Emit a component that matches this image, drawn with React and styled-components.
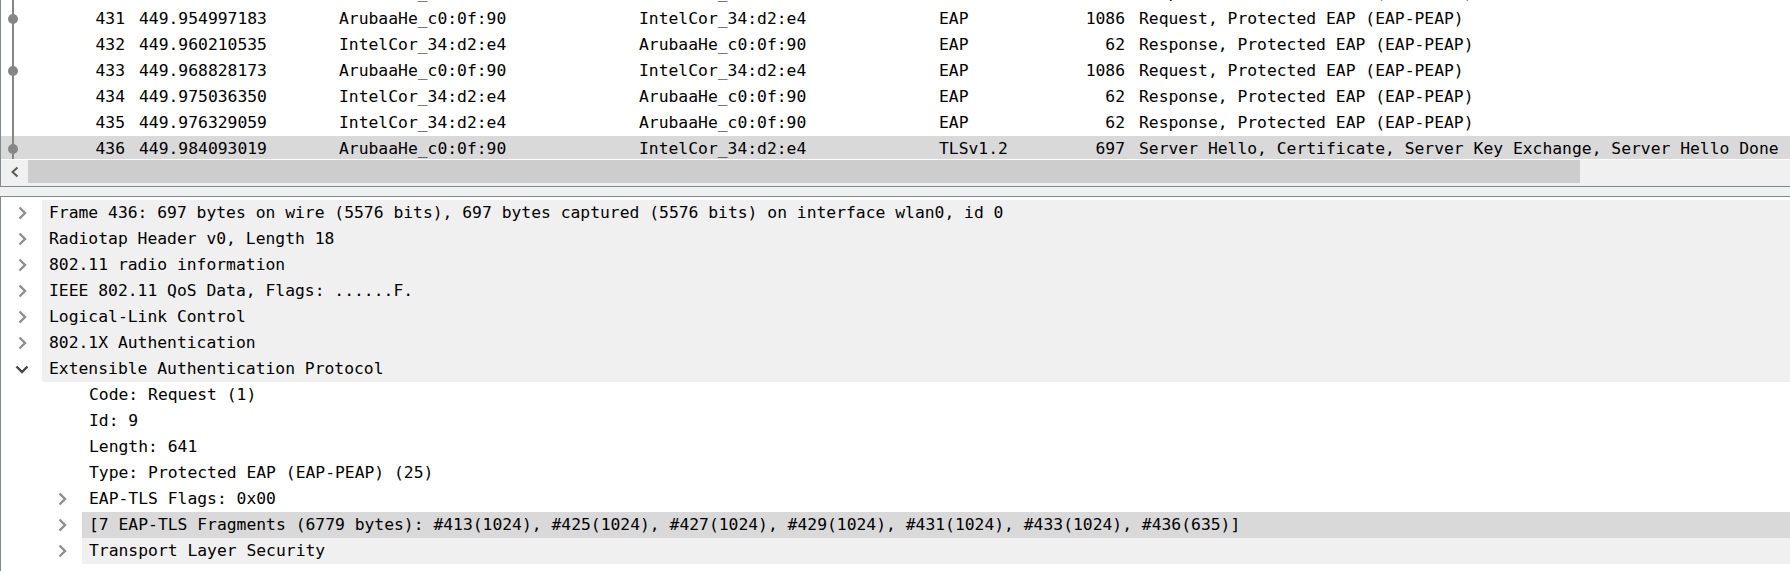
import React from "react";
import styled, { createGlobalStyle } from "styled-components";

const Global = createGlobalStyle`
  html, body { margin: 0; padding: 0; background: #ffffff; }
  body { font-family: "DejaVu Sans Mono", "Liberation Mono", monospace; }
`;

const Window = styled.div`
  width: 1790px;
  height: 571px;
  overflow: hidden;
  display: flex;
  flex-direction: column;
  background: #f0f0f0;
  font-family: "DejaVu Sans Mono", "Liberation Mono", monospace;
  font-size: 16.35px;
  color: #000;
`;

const PacketPane = styled.div`
  flex: 0 0 auto;
  display: flex;
  flex-direction: column;
  background: #ffffff;
  border-left: 1px solid #828790;
  border-bottom: 1px solid #828790;
`;

const ListViewport = styled.div`
  height: 159px;
  overflow: hidden;
  background: #ffffff;
  margin-bottom: 1px;
`;

const PacketList = styled.div`
  margin-top: -20px;
  display: flex;
  flex-direction: column;
`;

const PacketRow = styled.div`
  display: grid;
  grid-template-columns: 131px 200px 300px 300px 100px 100px 1fr;
  height: 26px;
  line-height: 26px;
  background: ${(p) => (p.$selected ? "#d9d9d9" : "#ffffff")};
  white-space: pre;
`;

const Cell = styled.div`
  padding: 0 7px;
  overflow: hidden;
  text-align: ${(p) => (p.$right ? "right" : "left")};
`;

const NoCell = styled.div`
  display: flex;
  justify-content: space-between;
  align-items: stretch;
  padding: 0 7px 0 6px;
`;

const HScroll = styled.div`
  height: 26px;
  display: flex;
  align-items: flex-start;
  background: #f0f0f0;
`;

const ScrollArrow = styled.div`
  width: 27px;
  height: 23px;
  display: flex;
  align-items: center;
  justify-content: center;
`;

const Thumb = styled.div`
  width: 1552px;
  height: 23px;
  background: #cdcdcd;
`;

const Splitter = styled.div`
  height: 9px;
  flex: 0 0 auto;
  background: #f0f0f0;
`;

const DetailPane = styled.div`
  flex: 1 1 auto;
  background: #ffffff;
  border-top: 1px solid #828790;
  border-left: 1px solid #828790;
  padding-top: 3px;
  display: flex;
  flex-direction: column;
`;

const TreeRow = styled.div`
  display: flex;
  height: 26px;
  line-height: 26px;
  padding-left: ${(p) => p.$level * 40}px;
  white-space: pre;
`;

const Toggle = styled.div`
  flex: 0 0 41px;
  display: flex;
  align-items: center;
  justify-content: center;
`;

const Label = styled.div`
  flex: 1 1 auto;
  padding-left: 7px;
  background: ${(p) =>
    p.$selected ? "#d9d9d9" : p.$shaded ? "#f0f0f0" : "#ffffff"};
`;

const Relation = ({ dot }) => (
  <svg width="12" height="26" viewBox="0 0 12 26">
    <rect x="5" y="0" width="2" height="26" fill="#868686" />
    {dot && <circle cx="6" cy="13" r="5" fill="#868686" />}
  </svg>
);

const Chevron = ({ open }) =>
  open ? (
    <svg width="14" height="14" viewBox="0 0 14 14">
      <polyline
        points="1.5,4.5 7,10 12.5,4.5"
        fill="none"
        stroke="#454545"
        strokeWidth="2.4"
      />
    </svg>
  ) : (
    <svg width="14" height="14" viewBox="0 0 14 14">
      <polyline
        points="4.5,1.5 10,7 4.5,12.5"
        fill="none"
        stroke="#8e8e8e"
        strokeWidth="2.4"
      />
    </svg>
  );

const packets = [
  ["430", "449.951791208", "IntelCor_34:d2:e4", "ArubaaHe_c0:0f:90", "EAP", "62", "Response, Protected EAP (EAP-PEAP)", true],
  ["431", "449.954997183", "ArubaaHe_c0:0f:90", "IntelCor_34:d2:e4", "EAP", "1086", "Request, Protected EAP (EAP-PEAP)", true],
  ["432", "449.960210535", "IntelCor_34:d2:e4", "ArubaaHe_c0:0f:90", "EAP", "62", "Response, Protected EAP (EAP-PEAP)", false],
  ["433", "449.968828173", "ArubaaHe_c0:0f:90", "IntelCor_34:d2:e4", "EAP", "1086", "Request, Protected EAP (EAP-PEAP)", true],
  ["434", "449.975036350", "IntelCor_34:d2:e4", "ArubaaHe_c0:0f:90", "EAP", "62", "Response, Protected EAP (EAP-PEAP)", false],
  ["435", "449.976329059", "IntelCor_34:d2:e4", "ArubaaHe_c0:0f:90", "EAP", "62", "Response, Protected EAP (EAP-PEAP)", false],
  ["436", "449.984093019", "ArubaaHe_c0:0f:90", "IntelCor_34:d2:e4", "TLSv1.2", "697", "Server Hello, Certificate, Server Key Exchange, Server Hello Done", true],
];

const tree = [
  { level: 0, toggle: "closed", shaded: true, text: "Frame 436: 697 bytes on wire (5576 bits), 697 bytes captured (5576 bits) on interface wlan0, id 0" },
  { level: 0, toggle: "closed", shaded: true, text: "Radiotap Header v0, Length 18" },
  { level: 0, toggle: "closed", shaded: true, text: "802.11 radio information" },
  { level: 0, toggle: "closed", shaded: true, text: "IEEE 802.11 QoS Data, Flags: ......F." },
  { level: 0, toggle: "closed", shaded: true, text: "Logical-Link Control" },
  { level: 0, toggle: "closed", shaded: true, text: "802.1X Authentication" },
  { level: 0, toggle: "open", shaded: true, text: "Extensible Authentication Protocol" },
  { level: 1, toggle: null, text: "Code: Request (1)" },
  { level: 1, toggle: null, text: "Id: 9" },
  { level: 1, toggle: null, text: "Length: 641" },
  { level: 1, toggle: null, text: "Type: Protected EAP (EAP-PEAP) (25)" },
  { level: 1, toggle: "closed", text: "EAP-TLS Flags: 0x00" },
  { level: 1, toggle: "closed", selected: true, text: "[7 EAP-TLS Fragments (6779 bytes): #413(1024), #425(1024), #427(1024), #429(1024), #431(1024), #433(1024), #436(635)]" },
  { level: 1, toggle: "closed", shaded: true, text: "Transport Layer Security" },
];

export default function App() {
  return (
    <>
      <Global />
      <Window>
        <PacketPane>
          <ListViewport>
            <PacketList>
              {packets.map((p) => (
                <PacketRow key={p[0]} $selected={p[0] === "436"}>
                  <NoCell>
                    <Relation dot={p[7]} />
                    <span>{p[0]}</span>
                  </NoCell>
                  <Cell>{p[1]}</Cell>
                  <Cell>{p[2]}</Cell>
                  <Cell>{p[3]}</Cell>
                  <Cell>{p[4]}</Cell>
                  <Cell $right>{p[5]}</Cell>
                  <Cell>{p[6]}</Cell>
                </PacketRow>
              ))}
            </PacketList>
          </ListViewport>
          <HScroll>
            <ScrollArrow>
              <svg width="10" height="12" viewBox="0 0 10 12">
                <polyline
                  points="7.5,1.5 2.5,6 7.5,10.5"
                  fill="none"
                  stroke="#5a5a5a"
                  strokeWidth="2"
                />
              </svg>
            </ScrollArrow>
            <Thumb />
          </HScroll>
        </PacketPane>
        <Splitter />
        <DetailPane>
          {tree.map((r, i) => (
            <TreeRow key={i} $level={r.level}>
              <Toggle>{r.toggle && <Chevron open={r.toggle === "open"} />}</Toggle>
              <Label $shaded={r.shaded} $selected={r.selected}>
                {r.text}
              </Label>
            </TreeRow>
          ))}
        </DetailPane>
      </Window>
    </>
  );
}
